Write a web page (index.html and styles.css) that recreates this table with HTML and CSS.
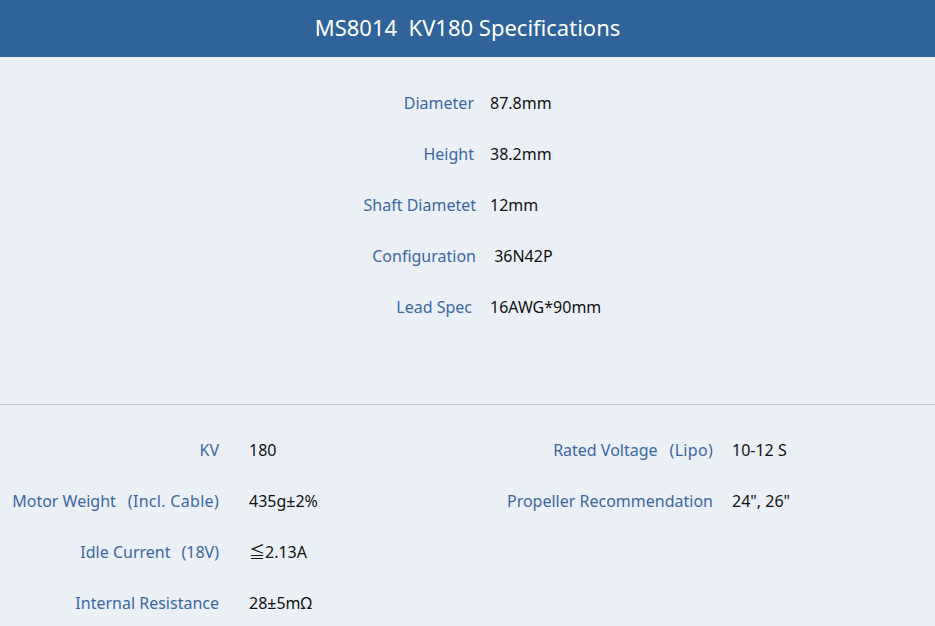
FILE: index.html
```html
<!DOCTYPE html>
<html>
<head>
<meta charset="utf-8">
<link rel="stylesheet" href="styles.css">
</head>
<body>
<header class="title">MS8014&nbsp; KV180 Specifications</header>
<section class="top">
  <div class="spec-grid">
    <div class="lbl">Diameter</div><div class="val">87.8mm</div>
    <div class="lbl">Height</div><div class="val">38.2mm</div>
    <div class="lbl lbl-wide">Shaft Diametet</div><div class="val">12mm</div>
    <div class="lbl lbl-wide">Configuration</div><div class="val">&nbsp;36N42P</div>
    <div class="lbl lbl-narrow">Lead Spec</div><div class="val">16AWG*90mm</div>
  </div>
</section>
<section class="bottom">
  <div class="col col-left">
    <div class="lbl">KV</div><div class="val">180</div>
    <div class="lbl">Motor Weight<span class="paren wide">(Incl. Cable)</span></div><div class="val">435g±2%</div>
    <div class="lbl">Idle Current<span class="paren">(18V)</span></div><div class="val">≦2.13A</div>
    <div class="lbl">Internal Resistance</div><div class="val">28±5mΩ</div>
  </div>
  <div class="col col-right">
    <div class="lbl">Rated Voltage<span class="paren wide">(Lipo)</span></div><div class="val">10-12 S</div>
    <div class="lbl">Propeller Recommendation</div><div class="val">24", 26"</div>
  </div>
</section>
</body>
</html>
```
FILE: styles.css
```css
html, body {
  margin: 0;
  padding: 0;
}
body {
  background: #ebf0f7;
  font-family: "Noto Sans", "Noto Sans CJK SC", sans-serif;
  font-size: 16px;
  line-height: 20px;
  width: 935px;
  height: 626px;
  overflow: hidden;
}
.title {
  height: 57px;
  background: #2f6399;
  color: #ffffff;
  font-size: 22px;
  line-height: 55px;
  text-align: center;
}
.top {
  padding: 20px 0 72px;
  border-bottom: 1px solid #c4c6c9;
  height: 255px;
}
.spec-grid {
  display: grid;
  grid-template-columns: 482px 1fr;
  grid-auto-rows: 51px;
}
.lbl {
  color: #3a67a2;
  text-align: right;
  display: flex;
  align-items: center;
  justify-content: flex-end;
  white-space: pre;
}
.paren {
  margin-left: 11px;
}
.paren.wide {
  margin-left: 12px;
  letter-spacing: 0.3px;
}
.val {
  color: #111111;
  display: flex;
  align-items: center;
  white-space: pre;
}
.spec-grid .lbl { padding-right: 8px; }
.spec-grid .lbl-wide { padding-right: 6px; }
.spec-grid .lbl-narrow { padding-right: 10px; }
.spec-grid .val { padding-left: 8px; }
.bottom {
  display: flex;
  padding-top: 19px;
}
.col {
  display: grid;
  grid-auto-rows: 51px;
  align-content: start;
}
.col-left {
  grid-template-columns: 219px 1fr;
  width: 478px;
}
.col-left .val { padding-left: 30px; }
.col-right {
  grid-template-columns: 235px 1fr;
  flex: 1;
}
.col-right .val { padding-left: 19px; }
```
